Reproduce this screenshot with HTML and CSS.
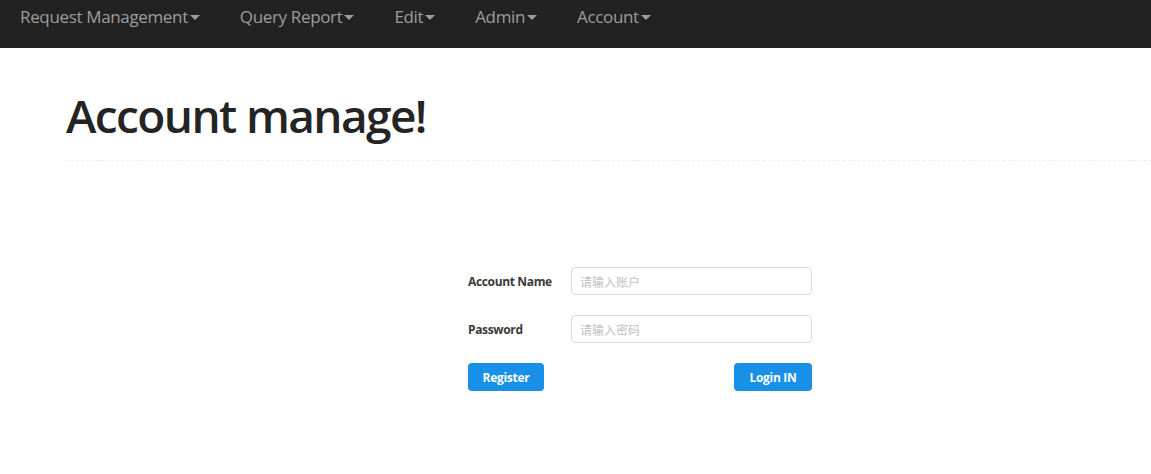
FILE: index.html
```html
<!DOCTYPE html>
<html>
<head>
<meta charset="utf-8">
<link rel="stylesheet" href="styles.css">
</head>
<body>
<nav class="navbar">
  <ul class="nav">
    <li class="nav-item">Request Management<span class="caret"></span></li>
    <li class="nav-item">Query Report<span class="caret"></span></li>
    <li class="nav-item">Edit<span class="caret"></span></li>
    <li class="nav-item">Admin<span class="caret"></span></li>
    <li class="nav-item">Account<span class="caret"></span></li>
  </ul>
</nav>
<main class="page">
  <div class="page-header">
    <h1 class="title">Account manage!</h1>
  </div>
  <form class="login-form">
    <div class="form-row">
      <label class="form-label">Account Name</label>
      <input class="form-input" type="text" placeholder="请输入账户">
    </div>
    <div class="form-row">
      <label class="form-label">Password</label>
      <input class="form-input" type="password" placeholder="请输入密码">
    </div>
    <div class="form-actions">
      <button type="button" class="btn">Register</button>
      <button type="button" class="btn btn-login">Login IN</button>
    </div>
  </form>
</main>
</body>
</html>
```

FILE: styles.css
```css
html, body {
  margin: 0;
  padding: 0;
  background: #fff;
  font-family: "Open Sans", "Noto Sans", "Noto Sans CJK SC", sans-serif;
  overflow: hidden;
}

.navbar {
  height: 48px;
  background: #222;
}

.nav {
  list-style: none;
  margin: 0;
  padding: 0;
  display: flex;
}

.nav-item {
  padding: 7px 20px 0 20px;
  line-height: 20px;
  font-size: 17px;
  color: #9d9d9d;
  display: flex;
  align-items: center;
  letter-spacing: -0.35px;
}

.caret {
  display: inline-block;
  width: 0;
  height: 0;
  margin-left: 2px;
  margin-top: 1px;
  border-top: 5px solid #9d9d9d;
  border-left: 5px solid transparent;
  border-right: 5px solid transparent;
}

.page {
  padding-left: 66px;
}

.page-header {
  padding-top: 36px;
  height: 113px;
  box-sizing: border-box;
  border-bottom: 1px dashed #eee;
}

.title {
  margin: -2px 0 0 0;
  font-size: 46px;
  line-height: 66px;
  font-weight: 600;
  color: #242424;
  letter-spacing: -1.6px;
}

.login-form {
  margin-left: 402px;
  margin-top: 106px;
  width: 344px;
  display: flex;
  flex-direction: column;
  gap: 20px;
}

.form-row {
  display: flex;
  align-items: center;
  height: 28px;
}

.form-label {
  width: 103px;
  font-size: 12px;
  font-weight: 700;
  color: #3a3a3a;
  letter-spacing: -0.35px;
}

.form-input {
  box-sizing: border-box;
  width: 241px;
  height: 28px;
  border: 1px solid #d9d9d9;
  border-radius: 4px;
  padding: 0 8px;
  font-size: 12px;
  font-family: "Noto Sans CJK SC", sans-serif;
  color: #333;
  outline: none;
}

.form-input::placeholder {
  color: #bfbfbf;
}

.form-actions {
  display: flex;
  justify-content: space-between;
  height: 28px;
}

.btn {
  box-sizing: border-box;
  height: 28px;
  width: 76px;
  border: none;
  border-radius: 4px;
  background: #1890e8;
  color: #fff;
  font-family: "Open Sans", "Noto Sans", sans-serif;
  font-size: 12px;
  font-weight: 700;
  letter-spacing: -0.3px;
  padding: 0;
  cursor: pointer;
}

.btn-login {
  width: 78px;
}
```
